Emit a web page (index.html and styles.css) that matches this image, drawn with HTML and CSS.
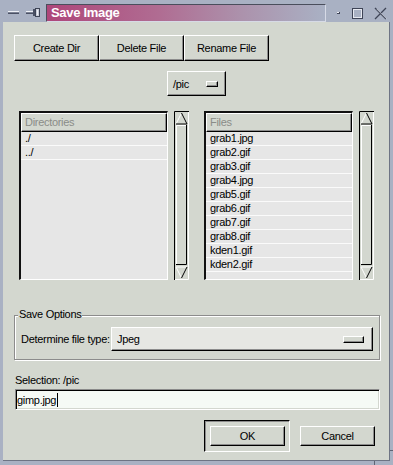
FILE: index.html
```html
<!DOCTYPE html>
<html>
<head>
<meta charset="utf-8">
<link rel="stylesheet" href="styles.css">
</head>
<body>
<div class="titlebar">
  <svg class="tb-left" width="46" height="22" viewBox="0 0 46 22">
    <rect x="8" y="11" width="11" height="1" fill="#eef0f6"/>
    <rect x="8" y="12" width="11" height="1" fill="#7c8294"/>
    <rect x="8" y="13" width="11" height="1" fill="#4a5064"/>
    <rect x="26" y="11" width="7" height="1" fill="#eef0f6"/>
    <rect x="26" y="12" width="7" height="1" fill="#7c8294"/>
    <rect x="26" y="13" width="7" height="1" fill="#4a5064"/>
    <rect x="33" y="9" width="2" height="7" fill="#4a5064"/>
    <rect x="35.5" y="8.5" width="4" height="8" fill="#c8ccd8" stroke="#3e4456"/>
    <rect x="37" y="10" width="1" height="5" fill="#eef0f6"/>
  </svg>
  <div class="title">Save Image</div>
  <svg class="tb-right" width="67" height="22" viewBox="0 0 67 22">
    <rect x="10" y="12" width="3" height="2" fill="#3e4456"/>
    <rect x="10" y="12" width="2" height="1" fill="#eef0f6"/>
    <rect x="25.5" y="8.5" width="10" height="10" fill="none" stroke="#3e4456"/>
    <rect x="26.5" y="9.5" width="8" height="8" fill="none" stroke="#e6e8f0"/>
    <path d="M48 8 L59 19 M59 8 L48 19" stroke="#3e4456" stroke-width="1.3"/>
    <path d="M49 9 L59 19" stroke="#e6e8f0" stroke-width="0.6" transform="translate(0.8,0)"/>
  </svg>
</div>
<div class="content">
  <div class="btnrow">
    <div class="btn">Create Dir</div>
    <div class="btn">Delete File</div>
    <div class="btn">Rename File</div>
  </div>
  <div class="optmenu small">
    <span>/pic</span><span class="ind"></span>
  </div>
  <div class="lists">
    <div class="listgroup">
      <div class="list">
        <div class="lhead">Directories</div>
        <div class="row">./</div>
        <div class="row">../</div>
      </div>
      <svg class="sb" width="15" height="169" viewBox="0 0 15 169">
        <rect width="15" height="169" fill="#d3d7cf"/>
        <path d="M0.5 169V0.5H15" stroke="#000" fill="none"/>
        <path d="M14.5 1V168.5H1" stroke="#fff" fill="none"/>
        <path d="M2 13 L7.5 2" stroke="#fff" fill="none"/>
        <path d="M7.5 2 L13 13 H2" stroke="#000" fill="none"/>
        <path d="M2.5 153V14.5H12.5" stroke="#fff" fill="none"/>
        <path d="M12.5 14V153.5H2" stroke="#000" fill="none"/>
        <path d="M13 156H2L7.5 167" stroke="#fff" fill="none"/>
        <path d="M7.5 167L13 156" stroke="#000" fill="none"/>
      </svg>
    </div>
    <div class="listgroup">
      <div class="list">
        <div class="lhead">Files</div>
        <div class="row">grab1.jpg</div>
        <div class="row">grab2.gif</div>
        <div class="row">grab3.gif</div>
        <div class="row">grab4.jpg</div>
        <div class="row">grab5.gif</div>
        <div class="row">grab6.gif</div>
        <div class="row">grab7.gif</div>
        <div class="row">grab8.gif</div>
        <div class="row">kden1.gif</div>
        <div class="row">kden2.gif</div>
      </div>
      <svg class="sb" width="15" height="169" viewBox="0 0 15 169">
        <rect width="15" height="169" fill="#d3d7cf"/>
        <path d="M0.5 169V0.5H15" stroke="#000" fill="none"/>
        <path d="M14.5 1V168.5H1" stroke="#fff" fill="none"/>
        <path d="M2 13 L7.5 2" stroke="#fff" fill="none"/>
        <path d="M7.5 2 L13 13 H2" stroke="#000" fill="none"/>
        <path d="M2.5 153V14.5H12.5" stroke="#fff" fill="none"/>
        <path d="M12.5 14V153.5H2" stroke="#000" fill="none"/>
        <path d="M13 156H2L7.5 167" stroke="#fff" fill="none"/>
        <path d="M7.5 167L13 156" stroke="#000" fill="none"/>
      </svg>
    </div>
  </div>
  <div class="group">
    <span class="legend">Save Options</span>
    <span class="ftlabel">Determine file type:</span>
    <div class="optmenu wide"><span>Jpeg</span><span class="ind big"></span></div>
  </div>
  <div class="sellabel">Selection: /pic</div>
  <div class="entry"><span class="etext">gimp.jpg</span><span class="cursor"></span></div>
  <div class="actions">
    <div class="deffr"><div class="btn act">OK</div></div>
    <div class="btn act">Cancel</div>
  </div>
</div>
<span class="notch-r"></span>
<span class="notch-b"></span>
</body>
</html>
```
FILE: styles.css
```css
* { box-sizing: border-box; }
html, body { margin: 0; padding: 0; }
body {
  position: relative;
  width: 393px;
  height: 465px;
  background: #a9b1c3;
  font-family: "Liberation Sans", Arial, sans-serif;
  font-size: 11px;
  letter-spacing: -0.3px;
  color: #000;
  overflow: hidden;
}
.titlebar { height: 22px; display: flex; align-items: flex-start; }
.tb-left { flex: none; }
.tb-right { flex: none; margin-left: 1px; }
.title {
  flex: none;
  margin-top: 4px;
  width: 280px;
  height: 18px;
  border: 1px solid;
  border-color: #4a4e5c #d6dae6 #d6dae6 #4a4e5c;
  background: linear-gradient(to right, #ae467a 0%, #b06c92 40%, #ac92ac 70%, #a9b1c4 100%);
  color: #fff;
  font-weight: bold;
  font-size: 13px;
  line-height: 16px;
  padding-left: 4px;
}
.content {
  margin-left: 3px;
  width: 387px;
  height: 439px;
  background: #d3d7cf;
  box-shadow: inset -1px -1px 0 #6e7484;
  display: flex;
  flex-direction: column;
  align-items: flex-start;
}
.btnrow { display: flex; margin: 13px 0 0 11px; }
.btn {
  width: 85px;
  height: 26px;
  border: 1px solid;
  border-color: #fff #000 #000 #fff;
  box-shadow: inset -1px -1px 0 #8c8c8c;
  background: #d3d7cf;
  display: flex;
  align-items: center;
  justify-content: center;
}
.optmenu {
  border: 1px solid;
  border-color: #fff #000 #000 #fff;
  box-shadow: inset -1px -1px 0 #8c8c8c;
  background: #d3d7cf;
  display: flex;
  align-items: center;
  justify-content: space-between;
}
.optmenu.small {
  align-self: center;
  margin-top: 10px;
  width: 59px;
  height: 25px;
  padding: 0 7px 0 5px;
}
.ind {
  width: 12px;
  height: 6px;
  border: 1px solid;
  border-color: #fff #000 #000 #fff;
  box-shadow: inset -1px -1px 0 #8c8c8c;
  background: #d3d7cf;
}
.ind.big { width: 21px; height: 7px; }
.lists { display: flex; gap: 15px; margin: 15px 0 0 16px; }
.listgroup { display: flex; gap: 6px; }
.list {
  width: 149px;
  height: 169px;
  border-style: solid;
  border-width: 2px 1px 1px 2px;
  border-color: #111 #fff #fff #111;
  background: #e6e6e6;
}
.lhead {
  height: 19px;
  border: 1px solid;
  border-color: #fff #000 #000 #fff;
  box-shadow: inset -1px -1px 0 #8c8c8c;
  background: #d3d7cf;
  color: #8a8c88;
  line-height: 17px;
  padding-left: 3px;
}
.row {
  height: 14px;
  line-height: 13px;
  border-bottom: 1px solid #fafafa;
  padding-left: 4px;
}
.sb { flex: none; display: block; }
.group {
  position: relative;
  margin: 35px 0 0 11px;
  width: 366px;
  height: 45px;
  border: 1px solid #8c8c8c;
  box-shadow: inset 1px 1px 0 #fff, 1px 1px 0 #fff;
  display: flex;
  align-items: flex-start;
  padding: 11px 6px 0 6px;
}
.legend {
  position: absolute;
  top: -8px;
  left: 3px;
  padding: 0 1px;
  background: #d3d7cf;
  line-height: 13px;
}
.ftlabel { width: 90px; flex: none; line-height: 24px; }
.optmenu.wide {
  flex: 1;
  height: 24px;
  background: #e6e7e3;
  padding: 0 8px 0 5px;
}
.sellabel { margin: 13px 0 0 12px; line-height: 14px; }
.entry {
  margin: 2px 0 0 12px;
  width: 365px;
  height: 21px;
  border: 1px solid;
  border-color: #8a8a8a #fff #fff #8a8a8a;
  box-shadow: inset 1px 1px 0 #000, inset -1px -1px 0 #d3d7cf;
  background: #f5faf5;
  display: flex;
  align-items: center;
  padding-left: 1px;
}
.cursor { width: 1px; height: 14px; background: #000; margin-left: 1px; }
.actions {
  display: flex;
  align-items: center;
  gap: 10px;
  margin: 10px 0 0 201px;
}
.deffr {
  width: 86px;
  height: 32px;
  border: 1px solid;
  border-color: #000 #fff #fff #000;
  box-shadow: inset 1px 1px 0 #8c8c8c;
  padding: 5px 4px 5px 5px;
}
.btn.act { width: 75px; height: 20px; }
.notch-r {
  position: absolute;
  right: 0;
  top: 450px;
  width: 3px;
  height: 1px;
  background: #5e6474;
}
.notch-b {
  position: absolute;
  left: 374px;
  bottom: 0;
  width: 1px;
  height: 4px;
  background: #5e6474;
}
```
